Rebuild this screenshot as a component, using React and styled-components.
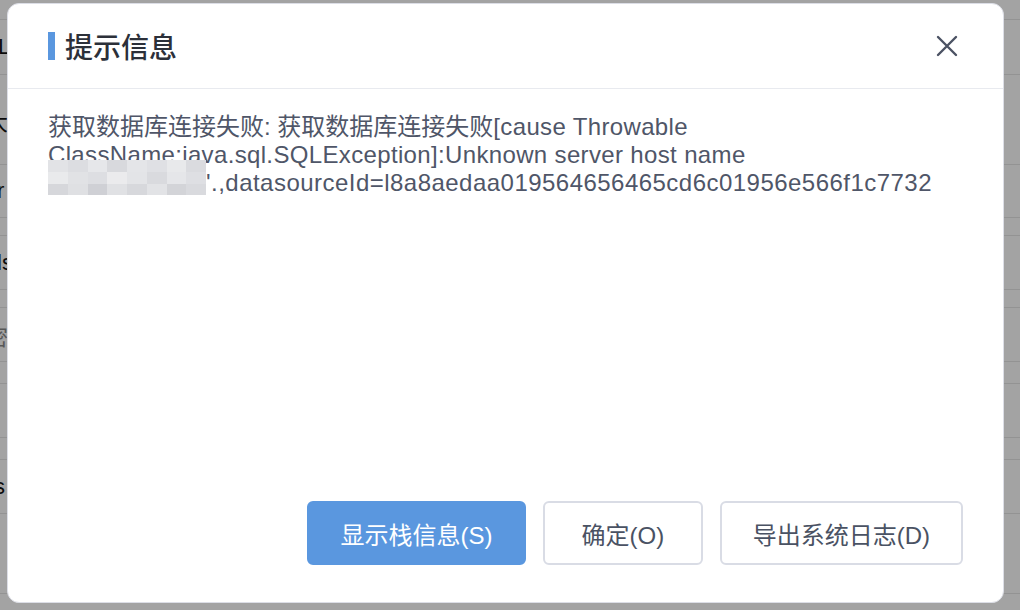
import React from "react";
import styled, { createGlobalStyle } from "styled-components";

const Global = createGlobalStyle`
  html, body { margin: 0; padding: 0; }
  body {
    width: 1020px;
    height: 610px;
    overflow: hidden;
    background: #ffffff;
    font-family: "Liberation Sans", "Noto Sans CJK SC", sans-serif;
  }
`;

const Page = styled.div`
  position: relative;
  width: 1020px;
  height: 610px;
  overflow: hidden;
  background: #ffffff;
`;

const Table = styled.div`
  display: flex;
  flex-direction: column;
`;

const Row = styled.div`
  height: ${(p) => p.$h}px;
  border-bottom: 1px solid #e6e6e6;
  box-sizing: border-box;
  display: flex;
  align-items: center;
  font-size: 22px;
  color: ${(p) => (p.$muted ? "#8a8a8a" : "#111111")};
  white-space: nowrap;
`;

const CellText = styled.span`
  margin-left: ${(p) => p.$shift || 0}px;
`;

const Overlay = styled.div`
  position: absolute;
  inset: 0;
  background: rgba(0, 0, 0, 0.36);
  display: flex;
  padding: 3px 16px 7px 7px;
  box-sizing: border-box;
`;

const Dialog = styled.div`
  flex: 1;
  display: flex;
  flex-direction: column;
  background: #ffffff;
  border: 1px solid #dcdee6;
  border-radius: 12px;
  overflow: hidden;
`;

const Header = styled.div`
  height: 84px;
  display: flex;
  align-items: center;
  justify-content: space-between;
  padding: 0 44px 0 40px;
  border-bottom: 1px solid #e8eaef;
`;

const TitleWrap = styled.div`
  display: flex;
  align-items: center;
  gap: 10px;
`;

const TitleBar = styled.span`
  display: block;
  width: 7px;
  height: 28px;
  background: #5a97df;
`;

const Title = styled.h2`
  margin: 0;
  font-size: 28px;
  font-weight: 500;
  color: #2c3039;
  letter-spacing: 0;
`;

const CloseButton = styled.button`
  width: 24px;
  height: 24px;
  padding: 0;
  border: none;
  background: transparent;
  display: flex;
  align-items: center;
  justify-content: center;
  cursor: pointer;
`;

const Body = styled.div`
  flex: 1;
  padding: 24px 40px 0 40px;
`;

const Message = styled.p`
  margin: 0;
  font-size: 24px;
  line-height: 28px;
  color: #4f5668;
`;

const Latin = styled.span`
  letter-spacing: ${(p) => p.$ls || 0.35}px;
`;

const NoWrap = styled.span`
  white-space: nowrap;
`;

const Mosaic = styled.span`
  display: inline-grid;
  grid-template-columns: repeat(8, 1fr);
  grid-template-rows: 12px 12px 11px;
  width: 158px;
  height: 35px;
  margin-top: -9px;
  margin-bottom: 2px;
  vertical-align: bottom;
`;

const Tile = styled.span`
  background: ${(p) => p.$c};
`;

const Footer = styled.div`
  display: flex;
  justify-content: flex-end;
  gap: 17px;
  padding: 0 40px 37px 0;
`;

const Button = styled.button`
  height: 64px;
  padding: 0 ${(p) => p.$px}px;
  border-radius: 6px;
  font-family: "Liberation Sans", "Noto Sans CJK SC", sans-serif;
  font-size: 24px;
  cursor: pointer;
  border: 2px solid ${(p) => (p.$primary ? "#5a97df" : "#d9dce5")};
  background: ${(p) => (p.$primary ? "#5a97df" : "#ffffff")};
  color: ${(p) => (p.$primary ? "#ffffff" : "#4a5263")};
`;

const mosaicColors = [
  "#e2e3e6", "#dcdde1", "#e6e7ea", "#d8d9dd", "#e4e5e8", "#dfe0e4", "#e8e9eb", "#dadbdf",
  "#e9eaec", "#e1e2e5", "#dddee2", "#ebebed", "#e3e4e7", "#d9dade", "#e5e6e9", "#dedfe3",
  "#d6d7db", "#dfe0e3", "#cfd0d5", "#e0e1e4", "#d7d8dc", "#e2e3e6", "#d3d4d8", "#d9dade",
];

const rows = [
  { h: 20, t: "" },
  { h: 55, t: "L", shift: -2 },
  { h: 90, t: "大", shift: -14 },
  { h: 53, t: "r", shift: -3 },
  { h: 18, t: "" },
  { h: 54, t: "ls", shift: -3 },
  { h: 18, t: "" },
  { h: 54, t: "密", shift: -14, muted: true },
  { h: 22, t: "" },
  { h: 54, t: "" },
  { h: 22, t: "" },
  { h: 54, t: "s", shift: -6 },
  { h: 80, t: "" },
];

export default function App() {
  return (
    <>
      <Global />
      <Page>
        <Table>
          {rows.map((r, i) => (
            <Row key={i} $h={r.h} $muted={r.muted}>
              <CellText $shift={r.shift}>{r.t}</CellText>
            </Row>
          ))}
        </Table>
        <Overlay>
          <Dialog>
            <Header>
              <TitleWrap>
                <TitleBar />
                <Title>提示信息</Title>
              </TitleWrap>
              <CloseButton aria-label="close">
                <svg width="22" height="22" viewBox="0 0 22 22">
                  <path
                    d="M2 2 L20 20 M20 2 L2 20"
                    stroke="#4b5263"
                    strokeWidth="2.4"
                    strokeLinecap="round"
                  />
                </svg>
              </CloseButton>
            </Header>
            <Body>
              <Message>
                获取数据库连接失败: 获取数据库连接失败
                <Latin>
                  [cause Throwable ClassName:java.sql.SQLException]:Unknown
                  server host name{" "}
                </Latin>
                <NoWrap>
                  <Mosaic>
                    {mosaicColors.map((c, i) => (
                      <Tile key={i} $c={c} />
                    ))}
                  </Mosaic>
                  <Latin $ls={0.47}>
                    '.,datasourceId=l8a8aedaa019564656465cd6c01956e566f1c7732
                  </Latin>
                </NoWrap>
              </Message>
            </Body>
            <Footer>
              <Button $primary $px={31.5}>显示栈信息(S)</Button>
              <Button $px={36.5}>确定(O)</Button>
              <Button $px={31}>导出系统日志(D)</Button>
            </Footer>
          </Dialog>
        </Overlay>
      </Page>
    </>
  );
}
